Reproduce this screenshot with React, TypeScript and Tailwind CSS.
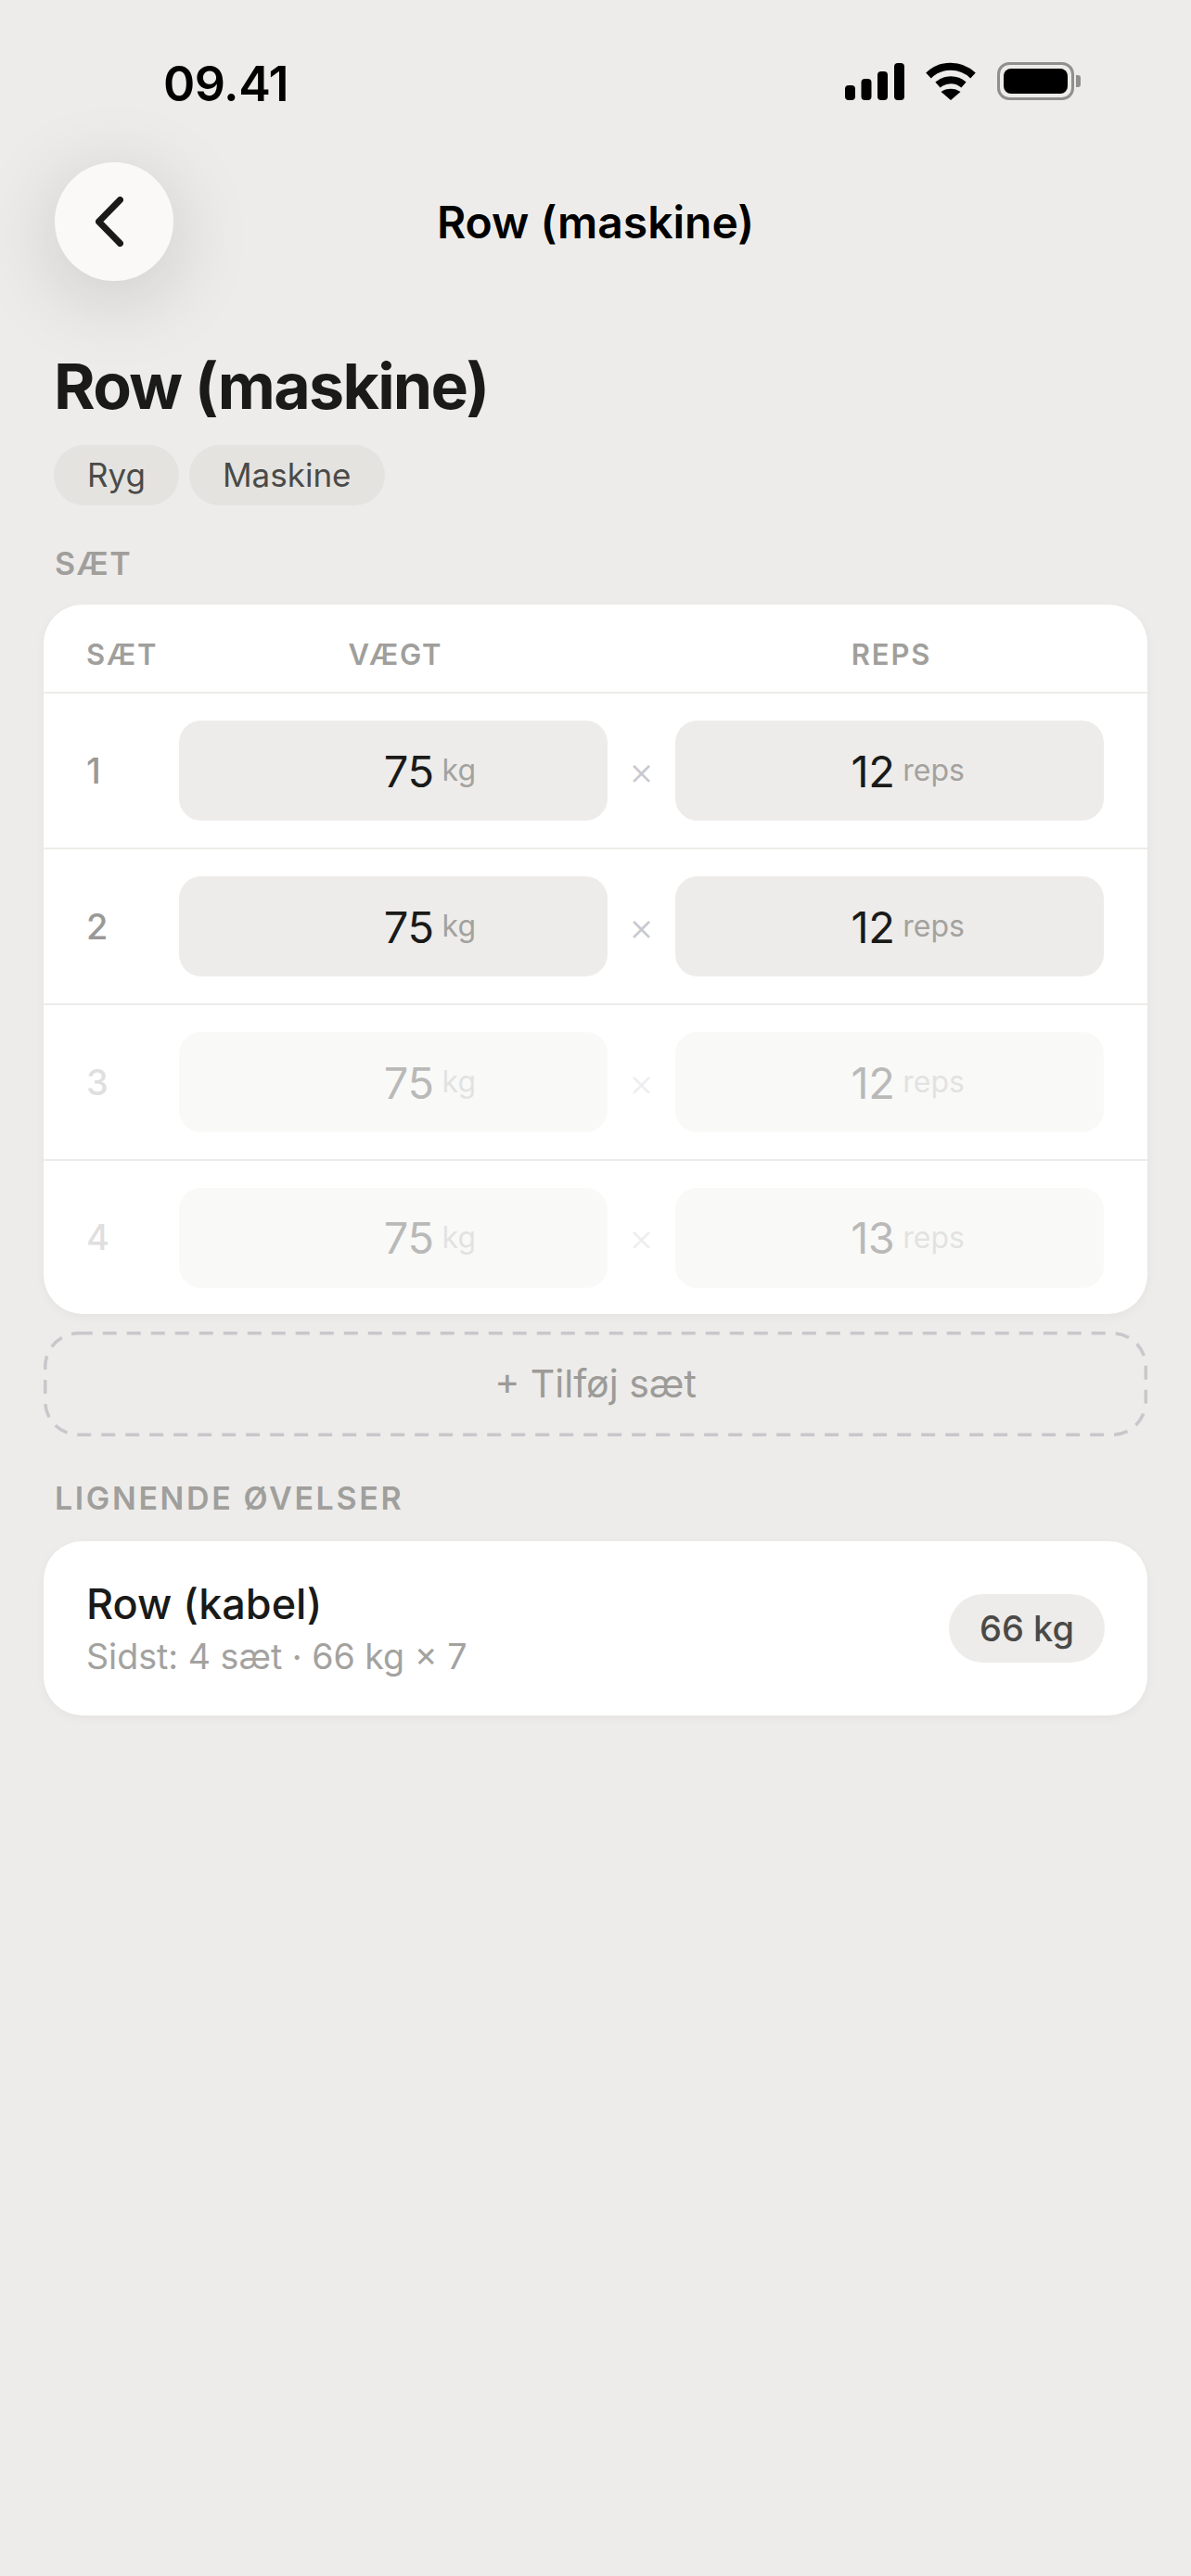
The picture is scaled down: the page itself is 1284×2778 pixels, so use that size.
const sets = [
  { n: 1, kg: 75, reps: 12, done: true },
  { n: 2, kg: 75, reps: 12, done: true },
  { n: 3, kg: 75, reps: 12, done: false },
  { n: 4, kg: 75, reps: 13, done: false },
];

function StatusIcons() {
  return (
    <div className="flex items-center">
      {/* signal */}
      <svg width="64" height="40" viewBox="0 0 64 40" fill="#000">
        <rect x="0" y="24" width="11" height="16" rx="4" />
        <rect x="17.5" y="17" width="11" height="23" rx="4" />
        <rect x="35" y="9" width="11" height="31" rx="4" />
        <rect x="53" y="0" width="11" height="40" rx="4" />
      </svg>
      {/* wifi */}
      <svg className="ml-[22px]" width="56" height="41" viewBox="0 0 56 41" fill="none">
        <path d="M4 14.5C17.5 1.5 38.5 1.5 52 14.5" stroke="#000" strokeWidth="8" />
        <path d="M14 24.5C22 17.5 34 17.5 42 24.5" stroke="#000" strokeWidth="8" />
        <path d="M28 41L17.5 32C23.5 27.5 32.5 27.5 38.5 32Z" fill="#000" />
      </svg>
      {/* battery */}
      <div className="ml-[22px] flex items-center">
        <div className="flex h-[41px] w-[83px] rounded-[13px] border-[3px] border-[#8f8f8f] p-[4px]">
          <div className="h-full w-full rounded-[8px] bg-black" />
        </div>
        <div className="ml-[2px] h-[13px] w-[5px] rounded-r-[3px] bg-[#8f8f8f]" />
      </div>
    </div>
  );
}

function ValueBox({ value, unit, padding }: { value: number; unit: string; padding: string }) {
  return (
    <div className={`flex h-[108px] w-[462px] items-center justify-end gap-[9px] rounded-[24px] bg-[#edecea] ${padding}`}>
      <span className="text-[47px] leading-none tracking-[-0.01em] text-[#1a1a18]">{value}</span>
      <span className="text-[32px] leading-none text-[#a3a29f]">{unit}</span>
    </div>
  );
}

export default function App() {
  return (
    <div className="min-h-[2778px] bg-[#edecea] font-[Inter,sans-serif]">
      {/* Status bar */}
      <div className="flex h-[175px] items-start justify-between pt-[61px] pl-[176px] pr-[119px]">
        <span className="text-[52px] font-semibold leading-[60px] tracking-[-0.01em] text-black">09.41</span>
        <div className="pt-[6px]">
          <StatusIcons />
        </div>
      </div>

      {/* Nav */}
      <div className="grid grid-cols-[128px_1fr_128px] items-center px-[59px]">
        <button className="flex h-[128px] w-[128px] items-center justify-center rounded-full bg-[#faf9f7] shadow-[0_16px_90px_rgba(0,0,0,0.16)]">
          <svg width="30" height="54" viewBox="0 0 30 54" fill="none" className="mr-[10px]">
            <path d="M26.5 3.5L3.5 27L26.5 50.5" stroke="#1a1a18" strokeWidth="7" strokeLinecap="round" strokeLinejoin="round" />
          </svg>
        </button>
        <div className="pt-[2px] text-center text-[48px] font-semibold text-black">Row (maskine)</div>
        <div />
      </div>

      {/* Title */}
      <h1 className="mt-[72px] px-[58px] text-[68px] font-bold leading-[82px] tracking-[-0.025em] text-[#1a1a18]">
        Row (maskine)
      </h1>
      <div className="mt-[23px] flex gap-[11px] px-[58px]">
        <span className="flex h-[65px] items-center rounded-full bg-[#e4e3e0] px-[36px] text-[35px] text-[#4a4a48]">Ryg</span>
        <span className="flex h-[65px] items-center rounded-full bg-[#e4e3e0] px-[36px] text-[35px] text-[#4a4a48]">Maskine</span>
      </div>

      {/* Sets */}
      <div className="mt-[43px] h-[40px] px-[59px] text-[34px] font-semibold leading-[40px] tracking-[0.045em] text-[#a09f9c]">SÆT</div>
      <div className="mx-[47px] mt-[24px] rounded-[42px] bg-white shadow-[0_3px_12px_rgba(0,0,0,0.04)]">
        <div className="flex h-[96px] items-center border-b-2 border-[#edecea] px-[46px] pt-[14px] text-[31px] font-semibold tracking-[0.06em] text-[#a09f9c]">
          <span className="w-[100px]">SÆT</span>
          <span className="w-[462px] pl-[5px] text-center">VÆGT</span>
          <span className="w-[73px]" />
          <span className="w-[462px] pl-[4px] text-center">REPS</span>
        </div>
        {sets.map((s, i) => (
          <div key={s.n} className={i < sets.length - 1 ? 'h-[168px] border-b-2 border-[#edecea]' : 'h-[165px]'}>
            <div className={`flex h-full items-center px-[46px] ${s.done ? '' : 'opacity-30'}`}>
              <span className="w-[100px] text-[38px] font-medium text-[#9a9997]">{s.n}</span>
              <ValueBox value={s.kg} unit="kg" padding="pr-[142px]" />
              <span className="w-[73px] pb-[2px] text-center text-[42px] font-light text-[#c9c9ce]">×</span>
              <ValueBox value={s.reps} unit="reps" padding="pr-[150px]" />
            </div>
          </div>
        ))}
      </div>

      <div className="relative mx-[47px] mt-[19px] flex h-[113px] items-center justify-center text-[41px] text-[#9c9b98]">
        <svg className="absolute inset-0" width="1190" height="113" viewBox="0 0 1190 113" fill="none">
          <rect x="1.75" y="1.75" width="1186.5" height="109.5" rx="36" stroke="#c8c7cb" strokeWidth="3.5" strokeDasharray="15 11" />
        </svg>
        + Tilføj sæt
      </div>

      {/* Similar exercises */}
      <div className="mt-[47px] h-[40px] px-[59px] text-[34px] font-semibold leading-[40px] tracking-[0.077em] text-[#a09f9c]">LIGNENDE ØVELSER</div>
      <div className="mx-[47px] mt-[26px] flex h-[188px] items-center justify-between rounded-[42px] bg-white px-[46px] shadow-[0_3px_12px_rgba(0,0,0,0.04)]">
        <div className="pt-[2px]">
          <div className="text-[45px] font-medium leading-[50px] text-[#1a1a18]">Row (kabel)</div>
          <div className="mt-[10px] text-[37.6px] leading-[44px] text-[#a3a29f]">Sidst: 4 sæt · 66 kg × 7</div>
        </div>
        <span className="flex h-[74px] items-center rounded-full bg-[#edecea] px-[33px] text-[38px] font-medium text-[#4a4a48]">66 kg</span>
      </div>
    </div>
  );
}
